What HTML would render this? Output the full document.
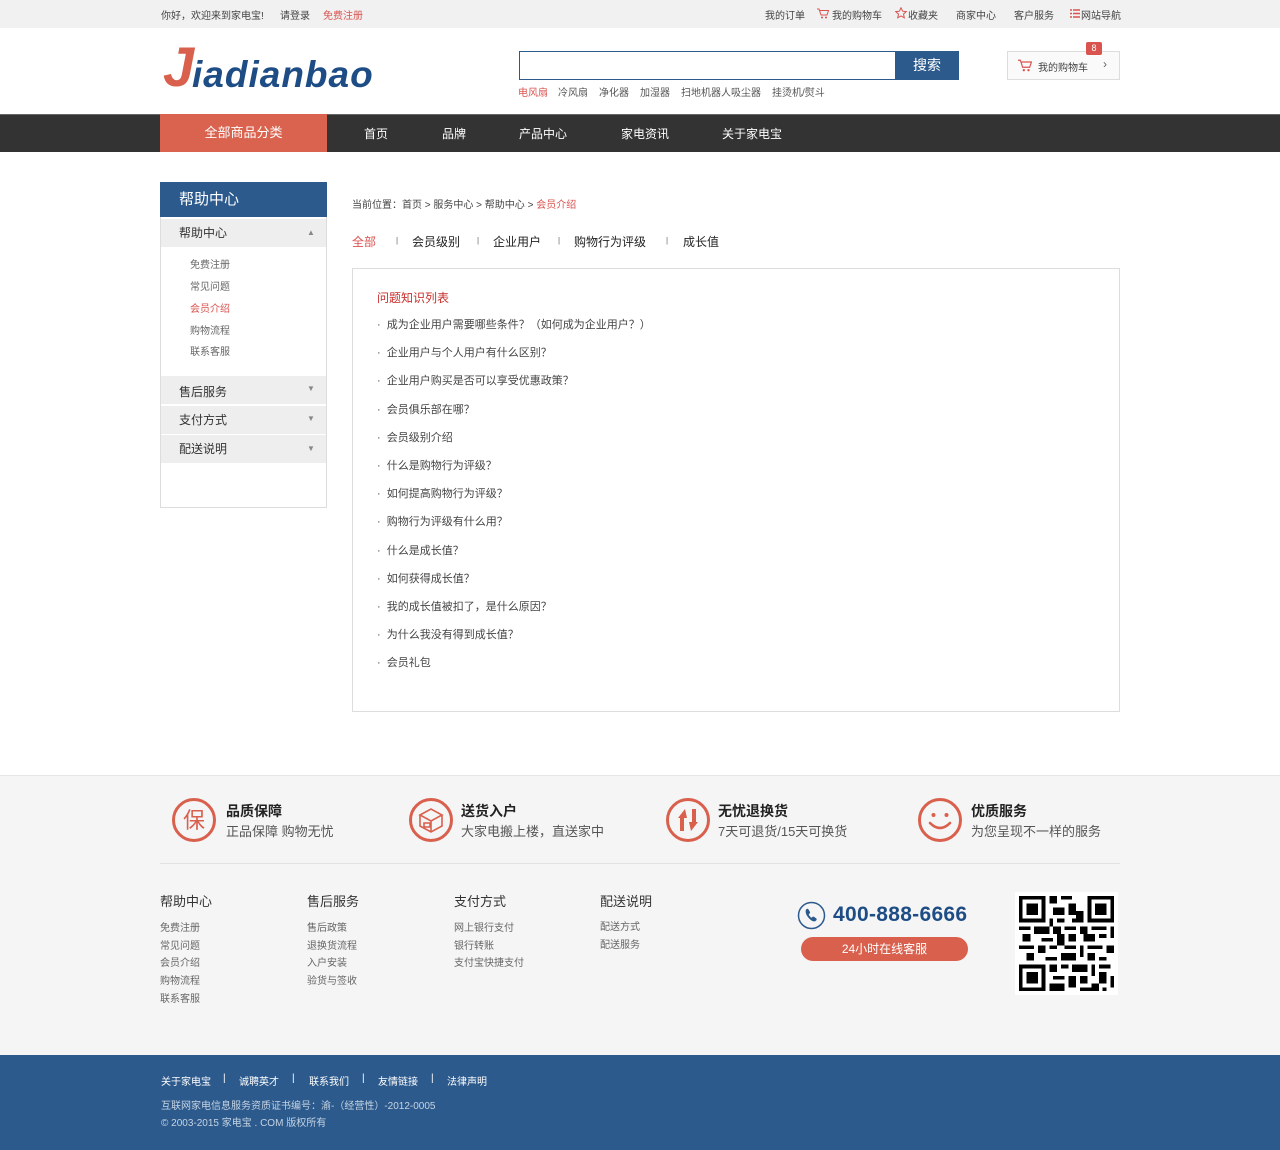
<!DOCTYPE html>
<html><head><meta charset="utf-8">
<style>
*{margin:0;padding:0;box-sizing:border-box}
body{width:1280px;height:1150px;position:relative;background:#fff;font-family:"Liberation Sans","Noto Sans CJK SC",sans-serif;color:#333;overflow:hidden}
.a{position:absolute;white-space:nowrap}
.s10{font-size:10px}.s11{font-size:11px}.s12{font-size:12px}.s13{font-size:13px}
.red{color:#d9534f}
</style></head><body>
<!-- top bar -->
<div class="a" style="left:0;top:0;width:1280px;height:28px;background:#f1f1f1"></div>
<div class="a s10" style="left:161px;top:7px;color:#444">你好，欢迎来到家电宝!</div>
<div class="a s10" style="left:280px;top:7px;color:#444">请登录</div>
<div class="a s10 red" style="left:323px;top:7px">免费注册</div>
<div class="a s10" style="left:765px;top:7px;color:#444">我的订单</div>
<svg class="a" style="left:817px;top:8px" width="12" height="11" viewBox="0 0 12 11"><path d="M0 1h2l2 6h6l1.5-4.5H3" fill="none" stroke="#d9534f" stroke-width="1"/><circle cx="5" cy="9.5" r="1" fill="#d9534f"/><circle cx="9" cy="9.5" r="1" fill="#d9534f"/></svg>
<div class="a s10" style="left:832px;top:7px;color:#444">我的购物车</div>
<svg class="a" style="left:895px;top:7px" width="12" height="12" viewBox="0 0 12 12"><path d="M6 .8l1.6 3.4 3.7.4-2.8 2.5.8 3.7L6 8.9 2.7 10.8l.8-3.7L.7 4.6l3.7-.4z" fill="none" stroke="#d9534f" stroke-width="1"/></svg>
<div class="a s10" style="left:908px;top:7px;color:#444">收藏夹</div>
<div class="a s10" style="left:956px;top:7px;color:#444">商家中心</div>
<div class="a s10" style="left:1014px;top:7px;color:#444">客户服务</div>
<svg class="a" style="left:1070px;top:9px" width="10" height="9"><path d="M0 1h2M3 1h7M0 4.5h2M3 4.5h7M0 8h2M3 8h7" stroke="#d9534f" stroke-width="1.4"/></svg>
<div class="a s10" style="left:1081px;top:7px;color:#444">网站导航</div>

<!-- logo -->
<div class="a" style="left:163px;top:36px;font-size:56px;font-style:italic;font-weight:bold;color:#d9604d;line-height:62px;font-family:'Liberation Sans',sans-serif">J</div>
<div class="a" style="left:192px;top:53px;font-size:37px;font-style:italic;font-weight:bold;color:#1e4d86;line-height:44px;letter-spacing:1px;font-family:'Liberation Sans',sans-serif">iadianbao</div>

<!-- search -->
<div class="a" style="left:519px;top:51px;width:377px;height:29px;border:1px solid #2c5a8c;border-right:none;background:#fff"></div>
<div class="a" style="left:895px;top:51px;width:64px;height:29px;background:#2c5a8c;color:#fff;font-size:14px;text-align:center;line-height:29px">搜索</div>
<div class="a s10 red" style="left:518px;top:84px">电风扇</div>
<div class="a s10" style="left:558px;top:84px;color:#555">冷风扇</div>
<div class="a s10" style="left:599px;top:84px;color:#555">净化器</div>
<div class="a s10" style="left:640px;top:84px;color:#555">加湿器</div>
<div class="a s10" style="left:681px;top:84px;color:#555">扫地机器人吸尘器</div>
<div class="a s10" style="left:772px;top:84px;color:#555">挂烫机/熨斗</div>

<!-- cart -->
<div class="a" style="left:1007px;top:51px;width:113px;height:29px;border:1px solid #ddd;background:#fafafa"></div>
<svg class="a" style="left:1018px;top:59px" width="14" height="13" viewBox="0 0 12 11"><path d="M0 1h2l2 6h6l1.5-4.5H3" fill="none" stroke="#d9534f" stroke-width="1"/><circle cx="5" cy="9.5" r="1" fill="#d9534f"/><circle cx="9" cy="9.5" r="1" fill="#d9534f"/></svg>
<div class="a s10" style="left:1038px;top:59px;color:#444">我的购物车</div>
<div class="a" style="left:1103px;top:57px;font-size:12px;color:#666">›</div>
<div class="a" style="left:1086px;top:42px;width:16px;height:13px;background:#d9534f;border-radius:2px;color:#fff;font-size:9px;text-align:center;line-height:13px">8</div>

<!-- nav -->
<div class="a" style="left:0;top:114px;width:1280px;height:38px;background:#333;border-top:1px solid #666"></div>
<div class="a" style="left:160px;top:114px;width:167px;height:38px;background:#d9634f;color:#fff;font-size:13px;text-align:center;line-height:38px">全部商品分类</div>
<div class="a s12" style="left:364px;top:125px;color:#fff">首页</div>
<div class="a s12" style="left:442px;top:125px;color:#fff">品牌</div>
<div class="a s12" style="left:519px;top:125px;color:#fff">产品中心</div>
<div class="a s12" style="left:621px;top:125px;color:#fff">家电资讯</div>
<div class="a s12" style="left:722px;top:125px;color:#fff">关于家电宝</div>

<!-- sidebar -->
<div class="a" style="left:160px;top:182px;width:167px;height:326px;border:1px solid #ddd"></div>
<div class="a" style="left:160px;top:182px;width:167px;height:35px;background:#2c5a8c;color:#fff;font-size:15px;line-height:35px;padding-left:19px">帮助中心</div>
<div class="a" style="left:161px;top:219px;width:165px;height:28px;background:#eee;font-size:12px;line-height:28px;padding-left:18px">帮助中心</div>
<div class="a" style="left:307px;top:228px;font-size:8px;color:#888">▲</div>
<div class="a s10" style="left:190px;top:256px;color:#666">免费注册</div>
<div class="a s10" style="left:190px;top:278px;color:#666">常见问题</div>
<div class="a s10 red" style="left:190px;top:300px">会员介绍</div>
<div class="a s10" style="left:190px;top:322px;color:#666">购物流程</div>
<div class="a s10" style="left:190px;top:343px;color:#666">联系客服</div>
<div class="a" style="left:161px;top:376px;width:165px;height:28px;background:#eee;font-size:12px;line-height:32px;padding-left:18px">售后服务</div>
<div class="a" style="left:161px;top:406px;width:165px;height:28px;background:#eee;font-size:12px;line-height:28px;padding-left:18px">支付方式</div>
<div class="a" style="left:161px;top:435px;width:165px;height:28px;background:#eee;font-size:12px;line-height:28px;padding-left:18px">配送说明</div>
<div class="a" style="left:307px;top:384px;font-size:8px;color:#888">▼</div>
<div class="a" style="left:307px;top:414px;font-size:8px;color:#888">▼</div>
<div class="a" style="left:307px;top:444px;font-size:8px;color:#888">▼</div>

<!-- breadcrumb & tabs -->
<div class="a s10" style="left:352px;top:196px;color:#444">当前位置：首页 &gt; 服务中心 &gt; 帮助中心 &gt; <span class="red">会员介绍</span></div>
<div class="a s12 red" style="left:352px;top:233px">全部</div>
<div class="a" style="left:396px;top:236px;font-size:8px;color:#666">|</div>
<div class="a s12" style="left:412px;top:233px;color:#222">会员级别</div>
<div class="a" style="left:477px;top:236px;font-size:8px;color:#666">|</div>
<div class="a s12" style="left:493px;top:233px;color:#222">企业用户</div>
<div class="a" style="left:558px;top:236px;font-size:8px;color:#666">|</div>
<div class="a s12" style="left:574px;top:233px;color:#222">购物行为评级</div>
<div class="a" style="left:666px;top:236px;font-size:8px;color:#666">|</div>
<div class="a s12" style="left:683px;top:233px;color:#222">成长值</div>

<!-- content box -->
<div class="a" style="left:352px;top:268px;width:768px;height:444px;border:1px solid #ddd"></div>
<div class="a s12" style="left:377px;top:289px;color:#c9302c">问题知识列表</div>
<div class="a s11" style="left:377px;top:311px;color:#444;line-height:28.2px">
· &nbsp;成为企业用户需要哪些条件？（如何成为企业用户？）<br>
· &nbsp;企业用户与个人用户有什么区别？<br>
· &nbsp;企业用户购买是否可以享受优惠政策？<br>
· &nbsp;会员俱乐部在哪？<br>
· &nbsp;会员级别介绍<br>
· &nbsp;什么是购物行为评级？<br>
· &nbsp;如何提高购物行为评级？<br>
· &nbsp;购物行为评级有什么用？<br>
· &nbsp;什么是成长值？<br>
· &nbsp;如何获得成长值？<br>
· &nbsp;我的成长值被扣了，是什么原因？<br>
· &nbsp;为什么我没有得到成长值？<br>
· &nbsp;会员礼包</div>

<!-- footer gray -->
<div class="a" style="left:0;top:775px;width:1280px;height:280px;background:#f5f5f5;border-top:1px solid #e6e6e6"></div>
<div class="a" style="left:160px;top:863px;width:960px;height:1px;background:#e2e2e2"></div>

<svg class="a" style="left:171px;top:797px" width="46" height="46"><circle cx="23" cy="23" r="20.5" fill="none" stroke="#d9604d" stroke-width="3"/><text x="23" y="31" text-anchor="middle" font-size="22" fill="#d9604d" font-family="Noto Sans CJK SC,sans-serif">保</text></svg>
<div class="a" style="left:226px;top:801px;font-size:14px;font-weight:bold;color:#222">品质保障</div>
<div class="a s13" style="left:226px;top:821px;color:#555">正品保障 购物无忧</div>

<svg class="a" style="left:408px;top:797px" width="46" height="46"><circle cx="23" cy="23" r="20.5" fill="none" stroke="#d9604d" stroke-width="3"/><path d="M12 18l11-6 11 6-11 6z M12 18v11l11 6 11-6V18 M23 24v11 M16 26h6v4h-6z" fill="none" stroke="#d9604d" stroke-width="1.6"/></svg>
<div class="a" style="left:461px;top:801px;font-size:14px;font-weight:bold;color:#222">送货入户</div>
<div class="a s13" style="left:461px;top:821px;color:#555">大家电搬上楼，直送家中</div>

<svg class="a" style="left:665px;top:797px" width="46" height="46"><circle cx="23" cy="23" r="20.5" fill="none" stroke="#d9604d" stroke-width="3"/><path d="M13 21l7-9 2 9h-3v13h-4V21z M33 25l-7 9-2-9h3V12h4v13z" fill="#d9604d"/></svg>
<div class="a" style="left:718px;top:801px;font-size:14px;font-weight:bold;color:#222">无忧退换货</div>
<div class="a s13" style="left:718px;top:821px;color:#555">7天可退货/15天可换货</div>

<svg class="a" style="left:917px;top:797px" width="46" height="46"><circle cx="23" cy="23" r="20.5" fill="none" stroke="#d9604d" stroke-width="3"/><circle cx="16.5" cy="18" r="2" fill="#d9604d"/><circle cx="29.5" cy="18" r="2" fill="#d9604d"/><path d="M13 26q10 10 20 0" fill="none" stroke="#d9604d" stroke-width="2.6" stroke-linecap="round"/></svg>
<div class="a" style="left:971px;top:801px;font-size:14px;font-weight:bold;color:#222">优质服务</div>
<div class="a s13" style="left:971px;top:821px;color:#555">为您呈现不一样的服务</div>

<div class="a s13" style="left:160px;top:891px;color:#333">帮助中心</div>
<div class="a s13" style="left:307px;top:891px;color:#333">售后服务</div>
<div class="a s13" style="left:454px;top:891px;color:#333">支付方式</div>
<div class="a s13" style="left:600px;top:891px;color:#333">配送说明</div>
<div class="a s10" style="left:160px;top:920px;color:#666;line-height:17.7px">免费注册<br>常见问题<br>会员介绍<br>购物流程<br>联系客服</div>
<div class="a s10" style="left:307px;top:920px;color:#666;line-height:17.7px">售后政策<br>退换货流程<br>入户安装<br>验货与签收</div>
<div class="a s10" style="left:454px;top:920px;color:#666;line-height:17.7px">网上银行支付<br>银行转账<br>支付宝快捷支付</div>
<div class="a s10" style="left:600px;top:919px;color:#666;line-height:17.7px">配送方式<br>配送服务</div>

<svg class="a" style="left:797px;top:901px" width="29" height="29"><circle cx="14.5" cy="14.5" r="13" fill="none" stroke="#2c5a8c" stroke-width="1.5"/><path d="M9 8.5c1-1 2-1 2.5 0l1.5 2.5c.3.7 0 1.3-.8 1.7-.6.3-.4 1 .2 2l1 1.2c.8.8 1.3 1 1.8.4.5-.8 1.1-.9 1.7-.5l2.3 1.6c.8.6.6 1.5-.3 2.3-1.5 1.4-4 .6-6.5-2s-4.6-5.7-3.4-9.2z" fill="#2c5a8c"/></svg>
<div class="a" style="left:833px;top:903px;font-size:21px;font-weight:bold;color:#1e4d86;letter-spacing:0.3px">400-888-6666</div>
<div class="a" style="left:801px;top:937px;width:167px;height:24px;background:#d9604d;border-radius:12px;color:#fff;font-size:12px;text-align:center;line-height:24px">24小时在线客服</div>

<svg class="a" style="left:1015px;top:892px" width="103" height="103" viewBox="-1 -1 27 27" shape-rendering="crispEdges">
<rect x="-1" y="-1" width="27" height="27" fill="#fff"/>
<g fill="#000"><path d="M0 0h7v7H0z M18 0h7v7h-7z M0 18h7v7H0z"/></g>
<g fill="#fff"><path d="M1 1h5v5H1z M19 1h5v5h-5z M1 19h5v5H1z"/></g>
<g fill="#000"><path d="M2 2h3v3H2z M20 2h3v3h-3z M2 20h3v3H2z"/>
<path d="M8 0h2v2H8z M11 0h3v1h-3z M9 3h3v2H9z M13 2h2v3h-2z M15 4h2v2h-2z M8 6h1v2H8z M10 6h2v1h-2z M14 6h3v1h-3z
M0 8h3v1H0z M4 8h4v2H4z M9 8h2v2H9z M12 8h3v1h-3z M16 8h2v2h-2z M19 8h4v1h-4z M24 8h1v3h-1z
M1 10h2v2H1z M6 11h3v1H6z M10 10h2v3h-2z M13 10h2v2h-2z M17 10h3v2h-3z M21 10h2v1h-2z
M0 13h4v1H0z M5 13h2v2H5z M8 13h2v1H8z M12 13h3v1h-3z M16 13h1v3h-1z M18 13h4v1h-4z M23 13h2v2h-2z
M2 15h2v2H2z M7 16h3v1H7z M11 15h4v2h-4z M18 15h2v2h-2z M21 16h2v1h-2z
M8 18h2v2H8z M11 18h2v1h-2z M14 18h4v2h-4z M19 18h1v3h-1z M21 18h3v1h-3z
M9 21h3v1H9z M13 21h2v3h-2z M16 21h2v2h-2z M21 20h2v3h-2z M24 21h1v3h-1z
M8 23h4v2H8z M16 24h3v1h-3z M19 23h2v2h-2z M22 24h1v1h-1z"/></g>
</svg>

<!-- bottom -->
<div class="a" style="left:0;top:1055px;width:1280px;height:95px;background:#2c5a8c"></div>
<div class="a s10" style="left:161px;top:1073px;color:#fff">关于家电宝</div>
<div class="a s10" style="left:223px;top:1073px;color:#fff">|</div>
<div class="a s10" style="left:239px;top:1073px;color:#fff">诚聘英才</div>
<div class="a s10" style="left:292px;top:1073px;color:#fff">|</div>
<div class="a s10" style="left:309px;top:1073px;color:#fff">联系我们</div>
<div class="a s10" style="left:362px;top:1073px;color:#fff">|</div>
<div class="a s10" style="left:378px;top:1073px;color:#fff">友情链接</div>
<div class="a s10" style="left:431px;top:1073px;color:#fff">|</div>
<div class="a s10" style="left:447px;top:1073px;color:#fff">法律声明</div>
<div class="a s10" style="left:161px;top:1097px;color:#c5d3e3">互联网家电信息服务资质证书编号：渝-（经营性）-2012-0005</div>
<div class="a s10" style="left:161px;top:1114px;color:#c5d3e3">© 2003-2015 家电宝 . COM 版权所有</div>
</body></html>
